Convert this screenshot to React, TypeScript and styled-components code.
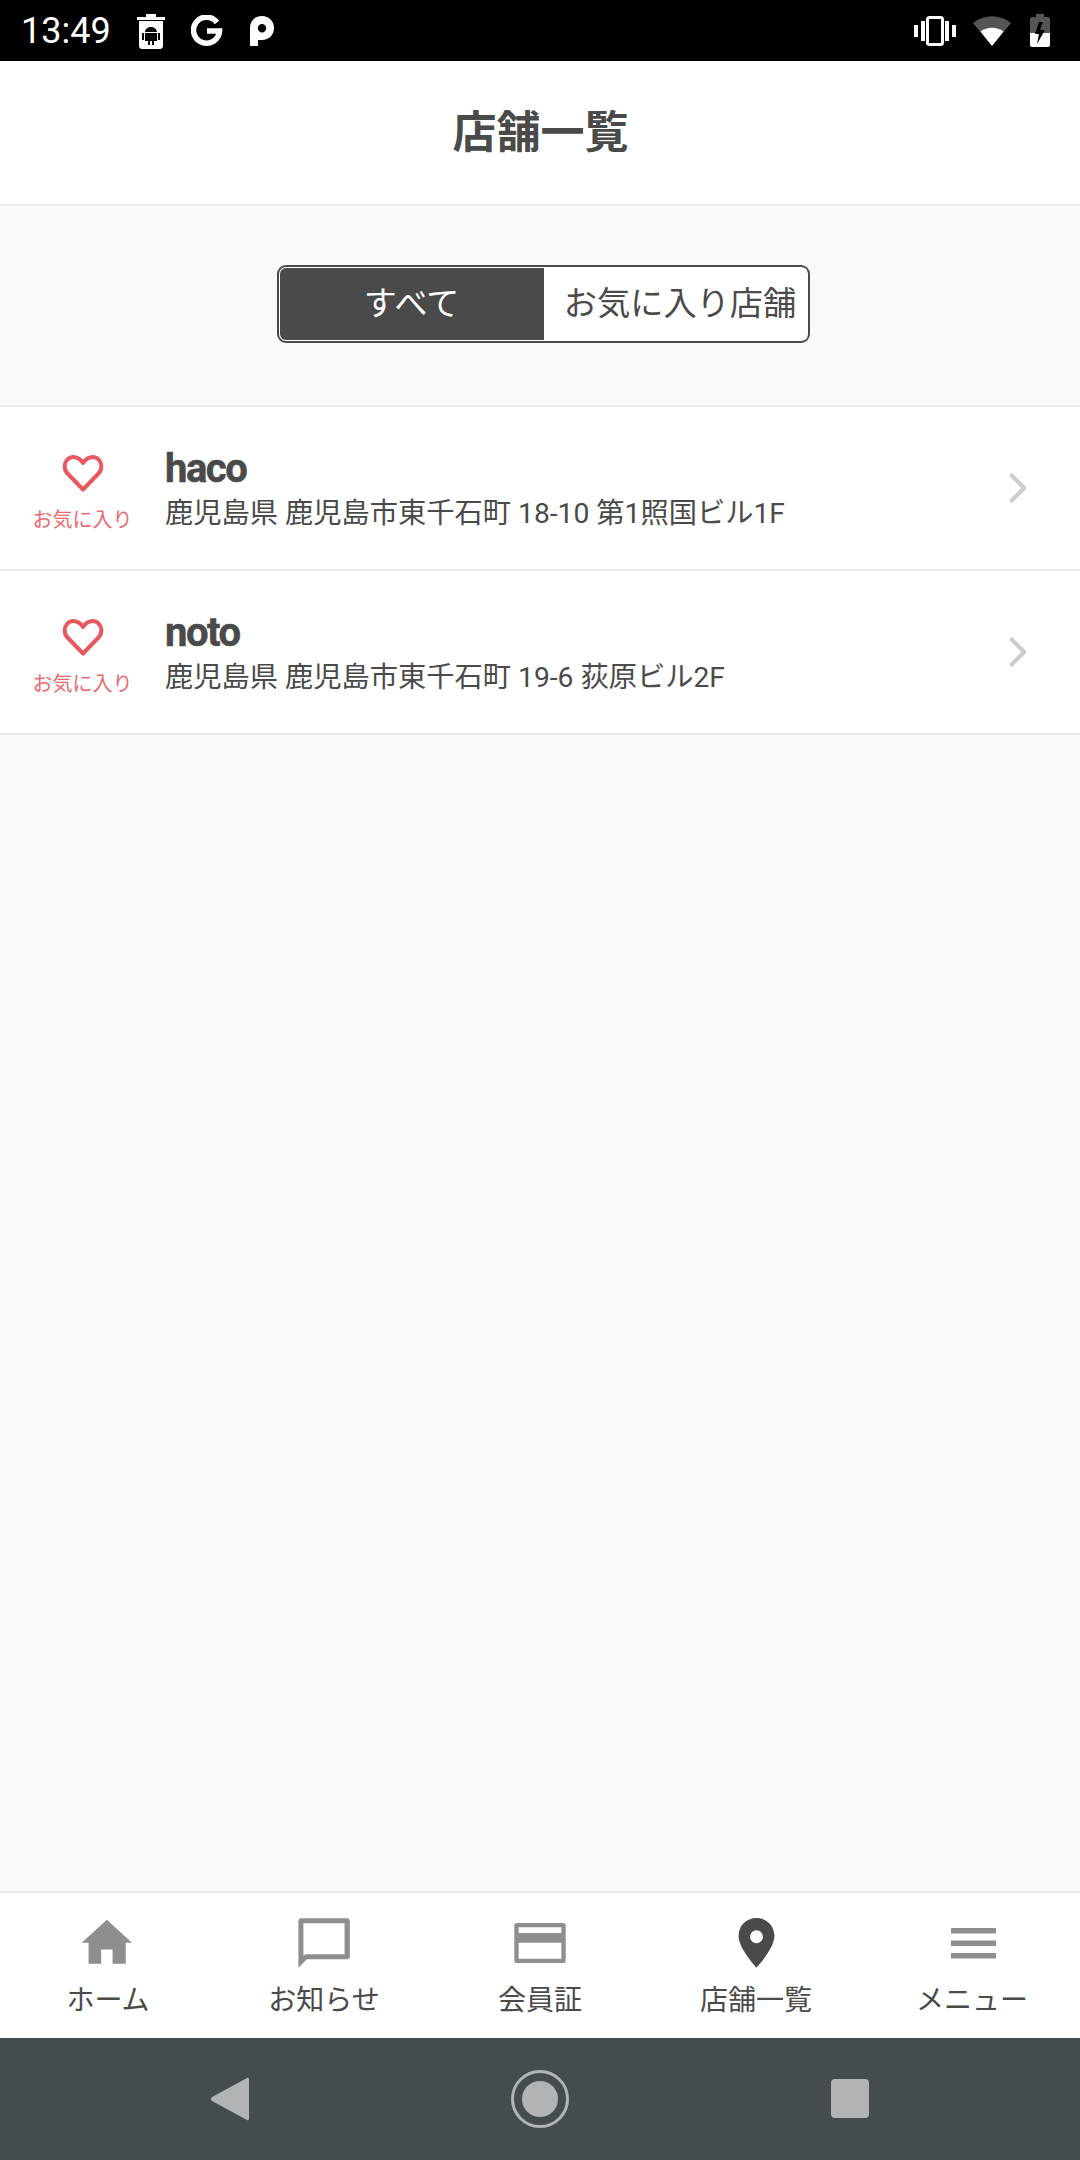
import styled, { createGlobalStyle } from 'styled-components'
import { ChevronRight } from 'lucide-react'

const GlobalStyle = createGlobalStyle`
  html, body {
    margin: 0;
    padding: 0;
    background: #f9f9f9;
  }
  * {
    box-sizing: border-box;
  }
  body {
    font-family: Roboto, "Noto Sans CJK JP", sans-serif;
    color: #4a4a4a;
  }
`

const Screen = styled.div`
  width: 1080px;
  height: 2160px;
  display: flex;
  flex-direction: column;
  overflow: hidden;
`

const StatusBar = styled.div`
  height: 61px;
  flex: none;
  background: #000;
  color: #fff;
  display: flex;
  align-items: center;
  padding: 0 30px 0 21px;
`

const Clock = styled.span`
  font-size: 36px;
  line-height: 60px;
  margin: 1px 25px 0 0;
`

const StatusIcon = styled.svg<{ $gap?: number }>`
  display: block;
  margin-right: ${(p) => p.$gap ?? 0}px;
`

const Spacer = styled.div`
  flex: 1;
`

const Header = styled.header`
  height: 145px;
  flex: none;
  background: #fff;
  border-bottom: 2px solid #ececec;
  display: flex;
  align-items: center;
  justify-content: center;
  padding-left: 1px;
`

const Title = styled.h1`
  margin: 0;
  font-size: 44px;
  font-weight: 700;
  line-height: 1;
`

const FilterArea = styled.div`
  height: 201px;
  flex: none;
  border-bottom: 2px solid #ececec;
  display: flex;
  justify-content: center;
  padding: 59px 0 0 6px;
`

const Segmented = styled.div`
  width: 533px;
  height: 78px;
  display: flex;
  background: #fff;
  border: 2px solid #4a4a4a;
  border-radius: 9px;
  padding: 1px;
  overflow: hidden;
`

const Segment = styled.div<{ $active?: boolean }>`
  width: ${(p) => (p.$active ? '264px' : '263px')};
  flex: none;
  display: flex;
  align-items: center;
  justify-content: center;
  font-size: ${(p) => (p.$active ? '33px' : '33.2px')};
  white-space: nowrap;
  padding: ${(p) => (p.$active ? '0 0 7px' : '0 0 7px 10px')};
  background: ${(p) => (p.$active ? '#4a4a4a' : '#fff')};
  color: ${(p) => (p.$active ? '#fff' : '#4a4a4a')};
  border-radius: ${(p) => (p.$active ? '6px 0 0 6px' : '0')};
`

const ShopRow = styled.div`
  height: 164px;
  flex: none;
  background: #fff;
  border-bottom: 2px solid #ececec;
  display: flex;
  align-items: center;
`

const Favorite = styled.div`
  width: 165px;
  flex: none;
  display: flex;
  flex-direction: column;
  align-items: center;
  margin-top: 11px;
`

const FavoriteLabel = styled.span`
  font-size: 20px;
  line-height: 28px;
  margin-top: 14px;
  color: #e86a70;
`

const ShopText = styled.div`
  flex: 1;
  min-width: 0;
  margin-top: 4px;
`

const ShopName = styled.div`
  font-size: 40px;
  font-weight: 700;
  line-height: 46px;
  letter-spacing: -1.5px;
  -webkit-text-stroke: 0.5px #4a4a4a;
`

const ShopAddress = styled.div`
  font-size: 28.25px;
  line-height: 40px;
  margin-top: 2px;
  white-space: nowrap;
`

const Chevron = styled(ChevronRight)`
  flex: none;
  margin-right: 37px;
  color: #cccccc;
`

const TabBar = styled.nav`
  margin-top: auto;
  height: 147px;
  flex: none;
  background: #fff;
  border-top: 2px solid #ececec;
  display: grid;
  grid-template-columns: repeat(5, 216px);
`

const Tab = styled.div`
  display: flex;
  flex-direction: column;
  align-items: center;
  padding-top: 24px;
`

const TabIconBox = styled.div<{ $active?: boolean }>`
  width: 56px;
  height: 56px;
  display: flex;
  align-items: center;
  justify-content: center;
  color: ${(p) => (p.$active ? '#4a4a4a' : '#8e8e8e')};
`

const TabIcon = styled.svg<{ $size: number }>`
  flex: none;
  width: ${(p) => p.$size}px;
  height: ${(p) => p.$size}px;
  fill: currentColor;
`

const TabLabel = styled.span`
  font-size: 28px;
  line-height: 34px;
  margin-top: 11px;
  white-space: nowrap;
`

const NavBar = styled.div`
  height: 122px;
  flex: none;
  background: #444c50;
  display: grid;
  grid-template-columns: repeat(3, 310px);
  justify-content: center;
  align-items: center;
  justify-items: center;
`

const shops = [
  { name: 'haco', address: '鹿児島県 鹿児島市東千石町 18-10 第1照国ビル1F' },
  { name: 'noto', address: '鹿児島県 鹿児島市東千石町 19-6 荻原ビル2F' },
]

const tabs = [
  {
    label: 'ホーム',
    size: 64,
    icon: <path d="M22 44.500V32h10v12.500h11.500V26H49L27 6 5 26h6v18.500z" />,
  },
  {
    label: 'お知らせ',
    size: 64,
    icon: (
      <path
        fillRule="evenodd"
        d="M5.600 7c0-1.500 1-2.500 2.500-2.500h40c1.500 0 2.500 1 2.500 2.500v31c0 1.500-1 2.500-2.500 2.500H13L5.600 48zM10 9v28.500l2-1.500h34V9z"
      />
    ),
  },
  {
    label: '会員証',
    size: 64,
    icon: (
      <path
        fillRule="evenodd"
        d="M8 8.750h40a2.500 2.500 0 0 1 2.500 2.500v30a2.500 2.500 0 0 1-2.500 2.500H8a2.500 2.500 0 0 1-2.500-2.500v-30A2.500 2.500 0 0 1 8 8.750zM9.300 12.500v5h37.400v-5zm0 13.500v14h37.400V26z"
      />
    ),
  },
  {
    label: '店舗一覧',
    size: 59,
    active: true,
    icon: (
      <path
        fillRule="evenodd"
        d="M28 2C18 2 11 9.500 11 19c0 12 17 30 17 30s17-18 17-30C45 9.500 38 2 28 2zm0 11.500a6.200 6.200 0 1 1 0 12.400 6.200 6.200 0 0 1 0-12.400z"
      />
    ),
  },
  {
    label: 'メニュー',
    size: 56,
    icon: <path d="M7 11h45v5.500H7zM7 23.500h45V29H7zM7 36h45v5.500H7z" />,
  },
]

export default function App() {
  return (
    <Screen>
      <GlobalStyle />
      <StatusBar>
        <Clock>13:49</Clock>
        <StatusIcon width="30" height="38" viewBox="0 0 30 38" $gap={25}>
          <path fill="#fff" d="M1 5h28v3H1zM10 2h10v3H10z" />
          <path
            fill="#fff"
            fillRule="evenodd"
            d="M3 9h24v25c0 1.500-1 3-3 3H6c-2 0-3-1.500-3-3zm6 11c.2-3 2.800-5 6-5s5.800 2 6 5zm0 1h12v8H9zm-3 0h2v7H6zm16 0h2v7h-2zm-10 8h2v4h-2zm4 0h2v4h-2z"
          />
        </StatusIcon>
        <StatusIcon width="32" height="32" viewBox="0 0 32 32" $gap={26}>
          <path
            fill="none"
            stroke="#fff"
            strokeWidth="5.500"
            d="M26 7.500A13 13 0 1 0 28.500 16H16"
          />
        </StatusIcon>
        <StatusIcon width="26" height="32" viewBox="0 0 26 32">
          <path
            fill="#fff"
            fillRule="evenodd"
            d="M1 13C1 6 6 1 13 1s12 5 12 12-5 12-12 12H9v6H1zm12-4a4.200 4.200 0 1 0 0 8.400A4.200 4.200 0 0 0 13 9z"
          />
        </StatusIcon>
        <Spacer />
        <StatusIcon width="42" height="30" viewBox="0 0 42 30" $gap={17}>
          <path fill="#fff" d="M0 9h4v12H0zM7 5h4v20H7zM31 5h4v20h-4zM38 9h4v12h-4z" />
          <rect x="13.500" y="1.500" width="15" height="27" rx="2" fill="none" stroke="#fff" strokeWidth="3" />
        </StatusIcon>
        <StatusIcon width="38" height="30" viewBox="0 0 38 30" $gap={19}>
          <path fill="#555" d="M19 30 0 7c11-9 27-9 38 0z" />
          <path fill="#fff" d="M19 30 7.500 15.500c6.500-5 16.500-5 23 0z" />
        </StatusIcon>
        <StatusIcon width="20" height="33" viewBox="0 0 20 33">
          <path fill="#555" d="M6 0h8v3h4c1 0 2 1 2 2v14H0V5c0-1 1-2 2-2h4z" />
          <path fill="#fff" d="M0 19h20v12c0 1-1 2-2 2H2c-1 0-2-1-2-2z" />
          <path fill="#000" d="M12 8H9L5 20h4L7 30l8-14h-5l3-8z" />
        </StatusIcon>
      </StatusBar>

      <Header>
        <Title>店舗一覧</Title>
      </Header>

      <FilterArea>
        <Segmented>
          <Segment $active>すべて</Segment>
          <Segment>お気に入り店舗</Segment>
        </Segmented>
      </FilterArea>

      {shops.map((shop) => (
        <ShopRow key={shop.name}>
          <Favorite>
            <svg width="42" height="38" viewBox="0 0 42 38">
              <path
                fill="none"
                stroke="#e9585f"
                strokeWidth="4"
                strokeLinejoin="round"
                d="M21 35.500 6 20C2 16 1.500 10 5 6c4-4.500 11.500-4 16 3 4.500-7 12-7.500 16-3 3.500 4 3 10-1 14z"
              />
            </svg>
            <FavoriteLabel>お気に入り</FavoriteLabel>
          </Favorite>
          <ShopText>
            <ShopName>{shop.name}</ShopName>
            <ShopAddress>{shop.address}</ShopAddress>
          </ShopText>
          <Chevron size={50} strokeWidth={2} />
        </ShopRow>
      ))}

      <TabBar>
        {tabs.map((tab) => (
          <Tab key={tab.label}>
            <TabIconBox $active={tab.active}>
              <TabIcon $size={tab.size} viewBox="0 0 56 56">
                {tab.icon}
              </TabIcon>
            </TabIconBox>
            <TabLabel>{tab.label}</TabLabel>
          </Tab>
        ))}
      </TabBar>

      <NavBar>
        <svg width="40" height="46" viewBox="0 0 40 46">
          <path fill="#b0b4b6" d="M37 2c1-.600 2 0 2 1.500v39c0 1.500-1 2-2 1.500L2 25c-1.500-1-1.500-3 0-4z" />
        </svg>
        <svg width="60" height="60" viewBox="0 0 60 60">
          <circle cx="30" cy="30" r="27.500" fill="none" stroke="#b0b4b6" strokeWidth="3" />
          <circle cx="30" cy="30" r="18" fill="#b0b4b6" />
        </svg>
        <svg width="40" height="40" viewBox="0 0 40 40">
          <rect width="38" height="39" x="1" y="0" rx="4" fill="#b0b4b6" />
        </svg>
      </NavBar>
    </Screen>
  )
}
